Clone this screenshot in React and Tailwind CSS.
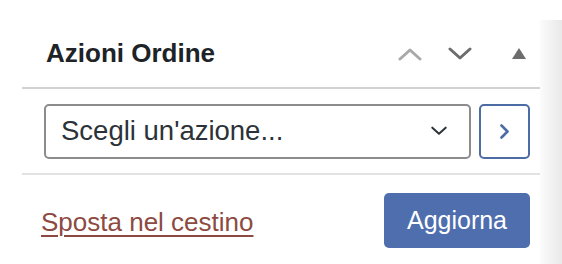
import React from 'react';

const ChevronUp = ({ className }) => (
  <svg viewBox="0 0 24 14" className={className} fill="none" stroke="currentColor" strokeWidth="3" strokeLinecap="round" strokeLinejoin="round">
    <path d="M2 12 L12 3 L22 12" />
  </svg>
);

const ChevronDown = ({ className, strokeWidth = 3 }) => (
  <svg viewBox="0 0 24 14" className={className} fill="none" stroke="currentColor" strokeWidth={strokeWidth} strokeLinecap="round" strokeLinejoin="round">
    <path d="M2 2 L12 11 L22 2" />
  </svg>
);

const App = () => {
  return (
    <div className="w-[562px] h-[264px] bg-white flex font-['Liberation_Sans',Arial,sans-serif] overflow-hidden">
      <div className="w-[540px] pl-[22px] flex flex-col">
        {/* header */}
        <div className="h-[89px] pt-[20px] flex items-center border-b-2 border-[#d2d2d2] pl-[24px] pr-[14px]">
          <h2 className="flex-1 text-[26px] font-bold text-[#1d2327]">Azioni Ordine</h2>
          <div className="flex items-center">
            <ChevronUp className="w-[24px] h-[14px] text-[#a9a9a9] mr-[26px]" />
            <ChevronDown className="w-[24px] h-[14px] text-[#6d6d6d] mr-[40px]" />
            <svg viewBox="0 0 14 11" className="w-[14px] h-[11px] text-[#6d6d6d]">
              <path d="M7 0 L14 11 L0 11 Z" fill="currentColor" />
            </svg>
          </div>
        </div>

        {/* select row */}
        <div className="h-[86px] flex items-center gap-[8px] pl-[22px] pr-[10px] border-b-2 border-[#e2e2e2]">
          <div className="w-[427px] h-[55px] border-2 border-[#8c8c8c] rounded-[5px] flex items-center justify-between pl-[15px] pr-[22px]">
            <span className="text-[27.5px] text-[#2c3338]">Scegli un'azione...</span>
            <ChevronDown className="w-[16px] h-[10px] text-[#2c3338]" strokeWidth={3} />
          </div>
          <div className="w-[51px] h-[55px] border-2 border-[#4c6ca6] rounded-[5px] flex items-center justify-center">
            <svg viewBox="0 0 9 15" className="w-[9px] h-[15px] text-[#4c6ca6]" fill="none" stroke="currentColor" strokeWidth="2.6" strokeLinecap="round" strokeLinejoin="round">
              <path d="M1.5 1.5 L7.5 7.5 L1.5 13.5" />
            </svg>
          </div>
        </div>

        {/* footer */}
        <div className="flex-1 flex items-start justify-between pl-[19px] pr-[10px] pt-[18px]">
          <a href="#" className="mt-[10px] text-[26px] text-[#8c4a42] underline underline-offset-[4px] decoration-[2px]">Sposta nel cestino</a>
          <button className="w-[146px] h-[55px] bg-[#4e6eae] rounded-[5px] text-white text-[25px]">Aggiorna</button>
        </div>
      </div>
      <div className="flex-1 mt-[20px] bg-gradient-to-r from-[#fbfbfb] to-[#e9e9e9]" />
    </div>
  );
};

export default App;
